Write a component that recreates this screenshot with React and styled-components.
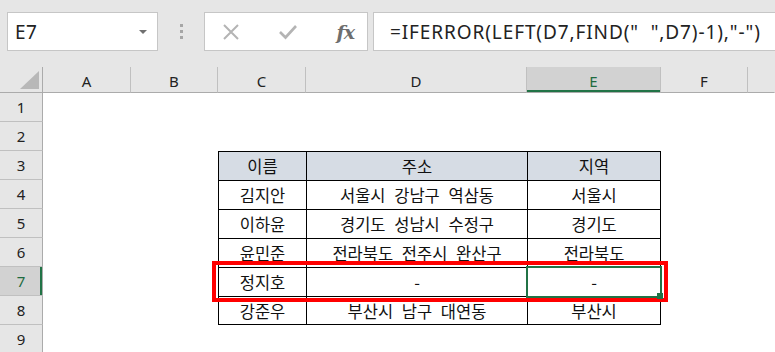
import React from "react";
import styled, { createGlobalStyle } from "styled-components";

const Global = createGlobalStyle`
  html, body { margin: 0; padding: 0; background: #ffffff; overflow: hidden; }
  body { width: 775px; height: 352px; font-family: "Noto Sans", "Liberation Sans", sans-serif; }
`;

const Page = styled.div`
  width: 775px;
  height: 352px;
  overflow: hidden;
  display: flex;
  flex-direction: column;
`;

const TopBar = styled.div`
  height: 67px;
  flex: none;
  background: #e6e6e6;
  display: flex;
  align-items: flex-start;
  padding: 12px 0 0 7px;
  box-sizing: border-box;
`;

const Box = styled.div`
  height: 39px;
  box-sizing: border-box;
  background: #ffffff;
  border: 1px solid #c6c6c6;
  display: flex;
  align-items: center;
  flex: none;
`;

const NameBox = styled(Box)`
  width: 151px;
  padding: 0 10px 0 7px;
  justify-content: space-between;
  font-size: 19px;
  letter-spacing: 0.5px;
  color: #222;
`;

const Arrow = styled.span`
  width: 0;
  height: 0;
  border-left: 4px solid transparent;
  border-right: 4px solid transparent;
  border-top: 4px solid #707070;
  margin-top: 1px;
`;

const Dots = styled.div`
  width: 46px;
  flex: none;
  display: flex;
  flex-direction: column;
  align-items: center;
  gap: 3px;
  padding-top: 12px;
`;

const Dot = styled.span`
  width: 3px;
  height: 3px;
  background: #a6a6a6;
`;

const ButtonsBox = styled(Box)`
  width: 164px;
  justify-content: space-between;
  padding: 0 13px 0 17px;
`;

const Fx = styled.span`
  font-family: "DejaVu Serif", "Liberation Serif", serif;
  font-style: italic;
  font-weight: bold;
  font-size: 19px;
  color: #6e6e6e;
  letter-spacing: -1px;
`;

const FormulaBox = styled(Box)`
  margin-left: 5px;
  flex: 1;
  border-right: none;
  padding-left: 16px;
  font-size: 19px;
  letter-spacing: 0.9px;
  color: #222;
  white-space: pre;
  overflow: hidden;
`;

const Sheet = styled.div`
  position: relative;
  flex: 1;
  display: grid;
  grid-template-columns: 43px 88px 87px 88px 221px 134px 87px 1fr;
  grid-template-rows: 26px repeat(9, 29px);
`;

const Corner = styled.div`
  background: #e6e6e6;
  border-right: 1px solid #ababab;
  border-bottom: 1px solid #ababab;
  box-sizing: border-box;
  position: relative;
  &::after {
    content: "";
    position: absolute;
    right: 3px;
    bottom: 3px;
    width: 0;
    height: 0;
    border-left: 19px solid transparent;
    border-bottom: 18px solid #b8b8b8;
  }
`;

const ColHeader = styled.div`
  background: ${(p) => (p.$active ? "#d2d2d2" : "#e6e6e6")};
  color: ${(p) => (p.$active ? "#1e6b40" : "#222")};
  border-right: 1px solid ${(p) => (p.$last ? "transparent" : "#c0c0c0")};
  border-bottom: 1px solid #ababab;
  box-shadow: ${(p) => (p.$active ? "inset 0 -2px 0 #217346" : "none")};
  box-sizing: border-box;
  display: flex;
  align-items: center;
  justify-content: center;
  font-size: 15px;
  padding-top: 2px;
`;

const RowHeader = styled.div`
  background: ${(p) => (p.$active ? "#d2d2d2" : "#e6e6e6")};
  color: ${(p) => (p.$active ? "#1e6b40" : "#222")};
  border-right: 1px solid #ababab;
  border-bottom: 1px solid #c0c0c0;
  box-shadow: ${(p) => (p.$active ? "inset -2px 0 0 #217346" : "none")};
  box-sizing: border-box;
  display: flex;
  align-items: center;
  justify-content: center;
  font-size: 15px;
`;

const Cell = styled.div`
  box-sizing: border-box;
  display: flex;
  align-items: center;
  justify-content: center;
  font-family: "Noto Sans CJK KR", "Noto Sans", sans-serif;
  font-size: 16.5px;
  word-spacing: 5px;
  color: #111;
  white-space: nowrap;
  background: ${(p) => (p.$head ? "#d6dce4" : "transparent")};
  border-left: ${(p) => (p.$table ? "1px solid #000" : "none")};
  border-top: ${(p) => (p.$table ? "1px solid #000" : "none")};
  border-right: ${(p) => (p.$lastCol ? "1px solid #000" : "none")};
  border-bottom: ${(p) => (p.$lastRow ? "1px solid #000" : "none")};
`;

const RedBox = styled.div`
  position: absolute;
  left: 212px;
  top: 194px;
  width: 456px;
  height: 41px;
  border: 4px solid #ff0000;
  box-sizing: border-box;
  pointer-events: none;
`;

const Selection = styled.div`
  position: absolute;
  left: 526px;
  top: 199px;
  width: 136px;
  height: 32px;
  border: 2px solid #217346;
  box-sizing: border-box;
  pointer-events: none;
`;

const FillHandle = styled.div`
  position: absolute;
  left: 657px;
  top: 226px;
  width: 6px;
  height: 6px;
  background: #217346;
`;

const cols = ["A", "B", "C", "D", "E", "F"];

const table = [
  ["이름", "주소", "지역"],
  ["김지안", "서울시 강남구 역삼동", "서울시"],
  ["이하윤", "경기도 성남시 수정구", "경기도"],
  ["윤민준", "전라북도 전주시 완산구", "전라북도"],
  ["정지호", "-", "-"],
  ["강준우", "부산시 남구 대연동", "부산시"],
];

function XIcon() {
  return (
    <svg width="18" height="18" viewBox="0 0 18 18">
      <path d="M2 2 L16 16 M16 2 L2 16" stroke="#b4b4b4" strokeWidth="2" fill="none" />
    </svg>
  );
}

function CheckIcon() {
  return (
    <svg width="20" height="18" viewBox="0 0 20 18">
      <path d="M2 9 L7.5 14.5 L18 3" stroke="#b4b4b4" strokeWidth="2.6" fill="none" />
    </svg>
  );
}

export default function App() {
  const rows = [];
  for (let r = 1; r <= 9; r++) {
    const tIdx = r - 3;
    const inTable = tIdx >= 0 && tIdx < table.length;
    rows.push(
      <RowHeader key={`rh${r}`} $active={r === 7}>
        {r}
      </RowHeader>
    );
    for (let c = 0; c < 7; c++) {
      const tc = c - 2;
      const isT = inTable && tc >= 0 && tc < 3;
      rows.push(
        <Cell
          key={`c${r}-${c}`}
          $table={isT}
          $head={isT && tIdx === 0}
          $lastCol={isT && tc === 2}
          $lastRow={isT && tIdx === table.length - 1}
        >
          {isT ? table[tIdx][tc] : null}
        </Cell>
      );
    }
  }

  return (
    <Page>
      <Global />
      <TopBar>
        <NameBox>
          <span>E7</span>
          <Arrow />
        </NameBox>
        <Dots>
          <Dot />
          <Dot />
          <Dot />
        </Dots>
        <ButtonsBox>
          <XIcon />
          <CheckIcon />
          <Fx>fx</Fx>
        </ButtonsBox>
        <FormulaBox>{'=IFERROR(LEFT(D7,FIND("  ",D7)-1),"-")'}</FormulaBox>
      </TopBar>
      <Sheet>
        <Corner />
        {cols.map((c) => (
          <ColHeader key={c} $active={c === "E"}>
            {c}
          </ColHeader>
        ))}
        <ColHeader $last />
        {rows}
        <RedBox />
        <Selection />
        <FillHandle />
      </Sheet>
    </Page>
  );
}
